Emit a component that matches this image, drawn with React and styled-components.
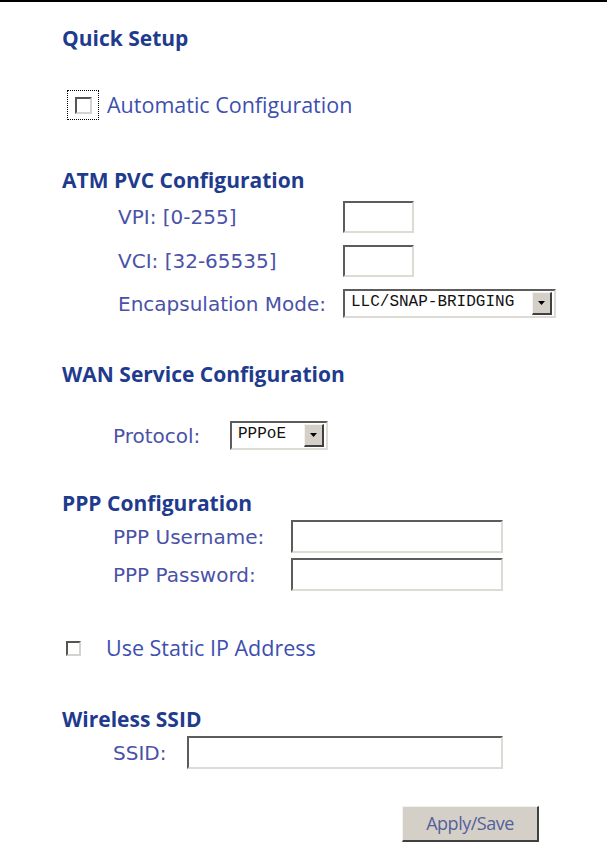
import React from "react";
import styled, { createGlobalStyle } from "styled-components";

const GlobalStyle = createGlobalStyle`
  body {
    margin: 0;
    background: #fff;
    font-family: "DejaVu Sans", Verdana, sans-serif;
  }
`;

const Page = styled.div`
  border-top: 2px solid #000;
  padding-left: 62px;
  height: 848px;
  display: flex;
  flex-direction: column;
`;

const Heading = styled.h2`
  margin: ${p => p.$top}px 0 0 0;
  font-family: "Open Sans", sans-serif;
  font-weight: 700;
  font-size: 21px;
  line-height: 26px;
  color: #1f3b8e;
`;

const CheckRow = styled.label`
  display: flex;
  align-items: center;
  margin-top: ${p => p.$top}px;
  margin-left: ${p => p.$left}px;
  gap: ${p => p.$gap}px;
  font-family: "Open Sans", sans-serif;
  font-size: 21.5px;
  line-height: ${p => p.$lh}px;
  color: #3d4fb0;
`;

const Focus = styled.span`
  display: flex;
  align-items: center;
  justify-content: center;
  width: 30px;
  height: 28px;
  border: 1px dotted #000;
`;

const Box = styled.span`
  display: block;
  box-sizing: border-box;
  width: ${p => p.$size}px;
  height: ${p => p.$size}px;
  background: #fff;
  border-top: 2px solid #555;
  border-left: 2px solid #555;
  border-right: 2px solid #d6d3ce;
  border-bottom: 2px solid #d6d3ce;
`;

const Fields = styled.div`
  display: grid;
  grid-template-columns: ${p => p.$label}px auto;
  align-items: center;
  row-gap: ${p => p.$gap}px;
  margin-top: ${p => p.$top}px;
  padding-left: ${p => p.$indent}px;
`;

const Label = styled.span`
  font-size: 20px;
  color: #4a52a8;
  line-height: 24px;
`;

const TextBox = styled.input`
  box-sizing: border-box;
  width: ${p => p.$w}px;
  height: ${p => p.$h || 33}px;
  margin: 0;
  padding: 0 4px;
  background: #fff;
  border-top: 2px solid #5c5c5c;
  border-left: 2px solid #5c5c5c;
  border-right: 2px solid #dedbd5;
  border-bottom: 2px solid #dedbd5;
  outline: none;
`;

const Select = styled.div`
  box-sizing: border-box;
  display: flex;
  align-items: center;
  justify-content: space-between;
  width: ${p => p.$w}px;
  height: ${p => p.$h}px;
  padding: 0 2px 0 6px;
  background: #fff;
  border-top: 2px solid #5c5c5c;
  border-left: 2px solid #5c5c5c;
  border-right: 2px solid #dedbd5;
  border-bottom: 2px solid #dedbd5;
  font-family: "Liberation Mono", monospace;
  font-size: 16px;
  color: #111;
`;

const SelectValue = styled.span`
  line-height: 16px;
  margin-top: -4px;
`;

const DropButton = styled.span`
  box-sizing: border-box;
  display: flex;
  align-items: center;
  justify-content: center;
  width: 20px;
  height: ${p => p.$h}px;
  background: #d4d0c8;
  border-top: 1px solid #f4f2ee;
  border-left: 1px solid #f4f2ee;
  border-right: 2px solid #404040;
  border-bottom: 2px solid #404040;
`;

const SaveRow = styled.div`
  margin-top: 37px;
  padding-left: 340px;
`;

const SaveButton = styled.button`
  box-sizing: border-box;
  width: 137px;
  height: 36px;
  background: #d4d0c8;
  border-top: 1px solid #f4f2ee;
  border-left: 1px solid #f4f2ee;
  border-right: 2px solid #404040;
  border-bottom: 2px solid #404040;
  font-family: "Open Sans", sans-serif;
  font-size: 18px;
  letter-spacing: -0.5px;
  color: #54609a;
  padding: 0 0 2px 0;
`;

const Arrow = () => (
  <svg width="8" height="4" viewBox="0 0 8 4">
    <path d="M0 0h7L3.5 4z" fill="#000" />
  </svg>
);

const Dropdown = ({ value, w, h }) => (
  <Select $w={w} $h={h}>
    <SelectValue>{value}</SelectValue>
    <DropButton $h={h - 6}>
      <Arrow />
    </DropButton>
  </Select>
);

export default function App() {
  return (
    <Page>
      <GlobalStyle />
      <Heading $top={23}>Quick Setup</Heading>

      <CheckRow $top={39} $left={5} $gap={8} $lh={30}>
        <Focus>
          <Box $size={17} />
        </Focus>
        Automatic Configuration
      </CheckRow>

      <Heading $top={47}>ATM PVC Configuration</Heading>
      <Fields $label={225} $indent={56} $gap={12} $top={8}>
        <Label>VPI: [0-255]</Label>
        <TextBox $w={71} $h={32} />
        <Label>VCI: [32-65535]</Label>
        <TextBox $w={71} $h={32} />
        <Label>Encapsulation Mode:</Label>
        <Dropdown value="LLC/SNAP-BRIDGING" w={213} h={29} />
      </Fields>

      <Heading $top={43}>WAN Service Configuration</Heading>
      <Fields $label={117} $indent={51} $gap={0} $top={34}>
        <Label>Protocol:</Label>
        <Dropdown value="PPPoE" w={98} h={29} />
      </Fields>

      <Heading $top={40}>PPP Configuration</Heading>
      <Fields $label={178} $indent={51} $gap={5} $top={4}>
        <Label>PPP Username:</Label>
        <TextBox $w={212} />
        <Label>PPP Password:</Label>
        <TextBox type="password" $w={212} />
      </Fields>

      <CheckRow $top={46} $left={4} $gap={25} $lh={22}>
        <Box $size={15} />
        Use Static IP Address
      </CheckRow>

      <Heading $top={47}>Wireless SSID</Heading>
      <Fields $label={74} $indent={51} $gap={0} $top={4}>
        <Label>SSID:</Label>
        <TextBox $w={316} />
      </Fields>

      <SaveRow>
        <SaveButton>Apply/Save</SaveButton>
      </SaveRow>
    </Page>
  );
}
